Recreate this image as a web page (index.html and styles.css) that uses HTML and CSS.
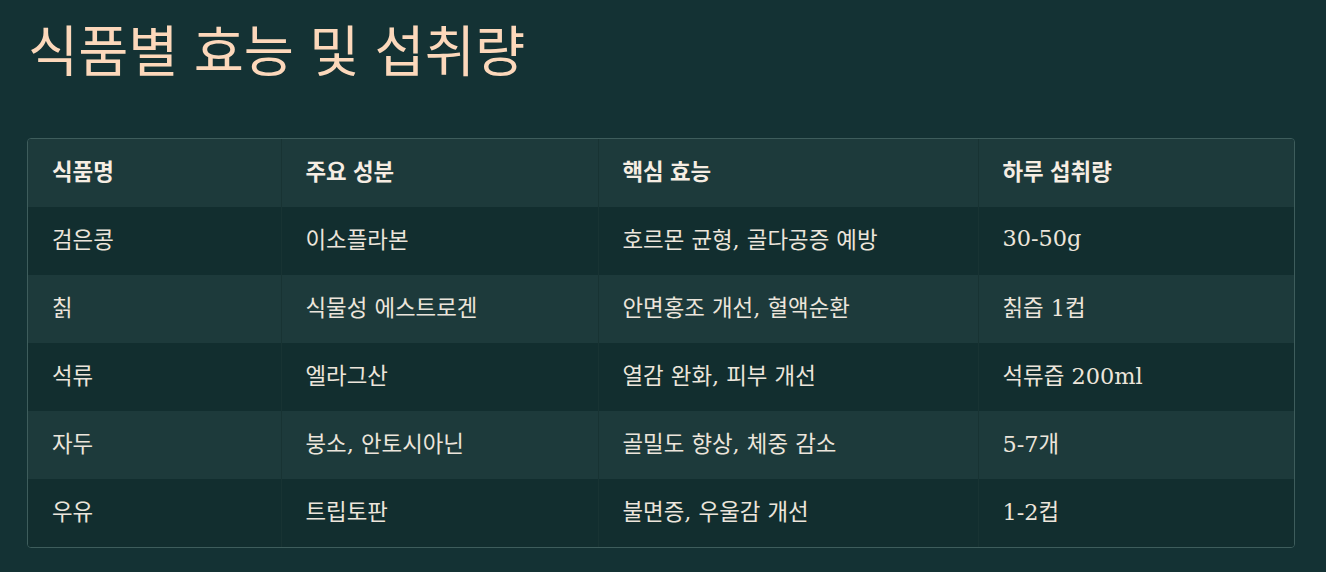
FILE: index.html
```html
<!DOCTYPE html>
<html lang="ko">
<head>
<meta charset="utf-8">
<link rel="stylesheet" href="styles.css">
</head>
<body>
<main class="page">
  <h1 class="title">식품별 효능 및 섭취량</h1>
  <div class="table-wrap">
    <table class="food-table">
      <colgroup>
        <col class="c1"><col class="c2"><col class="c3"><col class="c4">
      </colgroup>
      <thead>
        <tr><th>식품명</th><th>주요 성분</th><th>핵심 효능</th><th>하루 섭취량</th></tr>
      </thead>
      <tbody>
        <tr><td>검은콩</td><td>이소플라본</td><td>호르몬 균형, 골다공증 예방</td><td>30-50g</td></tr>
        <tr><td>칡</td><td>식물성 에스트로겐</td><td>안면홍조 개선, 혈액순환</td><td>칡즙 1컵</td></tr>
        <tr><td>석류</td><td>엘라그산</td><td>열감 완화, 피부 개선</td><td>석류즙 200ml</td></tr>
        <tr><td>자두</td><td>붕소, 안토시아닌</td><td>골밀도 향상, 체중 감소</td><td>5-7개</td></tr>
        <tr><td>우유</td><td>트립토판</td><td>불면증, 우울감 개선</td><td>1-2컵</td></tr>
      </tbody>
    </table>
  </div>
</main>
</body>
</html>
```
FILE: styles.css
```css
html, body {
  margin: 0;
  padding: 0;
  background: #143234;
}
body {
  font-family: "DejaVu Serif", "Noto Sans CJK KR", serif;
  color: #ece5db;
}
.page {
  padding: 7px 31px 0 27px;
}
.title {
  margin: 0 0 49px 0;
  padding-left: 1px;
  font-family: "Noto Sans CJK KR", sans-serif;
  font-weight: 400;
  font-size: 54.5px;
  line-height: 82px;
  color: #fcd8bb;
}
.table-wrap {
  border: 1px solid #3e5d5c;
  border-radius: 4px;
  overflow: hidden;
}
.food-table {
  width: 100%;
  border-collapse: collapse;
  table-layout: fixed;
}
.c1 { width: 253px; }
.c2 { width: 317px; }
.c3 { width: 380px; }
.c4 { width: auto; }
.food-table th,
.food-table td {
  height: 68px;
  padding: 0 24px 6px;
  text-align: left;
  font-size: 22.4px;
  box-sizing: border-box;
  border-left: 1px solid #183333;
}
.food-table th:first-child,
.food-table td:first-child {
  border-left: none;
}
.food-table th {
  font-family: "Noto Sans CJK KR", sans-serif;
  font-weight: 700;
  color: #f6ede3;
  background: #1d3a3b;
}
.food-table tbody tr:nth-child(odd) td {
  background: #122e2f;
}
.food-table tbody tr:nth-child(even) td {
  background: #1d3a3b;
}
```
